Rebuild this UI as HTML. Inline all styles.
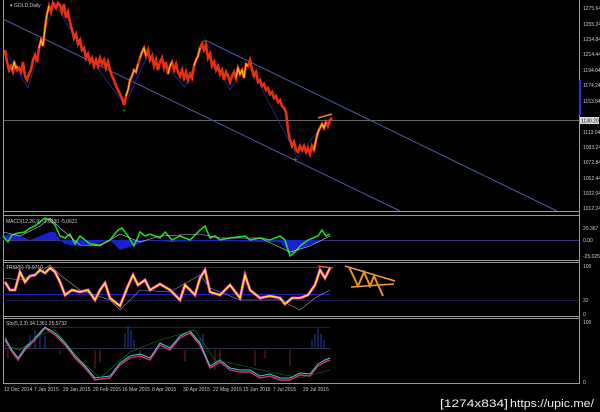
<!DOCTYPE html>
<html><head><style>
html,body{margin:0;padding:0;background:#000;width:600px;height:412px;overflow:hidden}
svg{display:block}
text{font-family:"Liberation Sans",sans-serif}
</style></head><body>
<svg width="600" height="412" viewBox="0 0 600 412">
<rect width="600" height="412" fill="#000"/>
<g stroke="#9a9a9a" stroke-width="1" fill="none">
<line x1="3.5" y1="0" x2="3.5" y2="384"/>
<line x1="579.5" y1="0" x2="579.5" y2="384"/>
<line x1="3" y1="211.5" x2="580" y2="211.5"/>
<line x1="3" y1="215.5" x2="580" y2="215.5"/>
<line x1="3" y1="260.5" x2="580" y2="260.5"/>
<line x1="3" y1="262.5" x2="580" y2="262.5"/>
<line x1="3" y1="316.5" x2="580" y2="316.5"/>
<line x1="3" y1="318.5" x2="580" y2="318.5"/>
<line x1="3" y1="383.5" x2="580" y2="383.5"/>
</g>
<line x1="3" y1="120.5" x2="579" y2="120.5" stroke="#888" stroke-width="0.8"/>
<line x1="3" y1="19" x2="400" y2="211" stroke="#4a5aa8" stroke-width="1"/>
<line x1="205" y1="40" x2="557" y2="211" stroke="#4a5aa8" stroke-width="1"/>
<polyline fill="none" stroke="#2030a0" stroke-width="0.8" points="5,50 28,88 45,30 55,3 75,38 125,105 150,50 185,87 205,40 230,90 250,62 265,95 298,158 322,125"/>
<rect x="579" y="80" width="2" height="35" fill="#3030d0"/>
<polyline fill="none" stroke="#e83010" stroke-width="2.6" points="5,50 7,62 9,70 11,66 13,72 15,64 17,70 19,68 21,72 23,62 25,76 27,80 29,74 31,70 33,60 35,55 37,62 39,48 41,40 43,46 45,28 47,14 49,6 51,12 53,3 56,8 58,3 60,5 62,12 64,4 66,18 68,12 70,22 72,30 74,38 76,34 78,44 80,40 82,50 84,48 86,58 88,54 90,62 92,58 94,66 96,60 98,66 100,58 102,64 104,60 106,68 108,62 110,70 112,76 114,80 116,86 118,90 120,94 122,98 124,105 126,96 128,90 130,80 132,76 134,70 136,72 138,64 140,58 142,52 144,48 146,56 148,50 150,60 152,56 154,66 156,60 158,70 160,62 162,58 164,68 166,62 168,74 170,66 172,62 174,70 176,64 178,72 180,76 182,70 184,78 186,72 188,80 190,74 192,78 194,66 196,60 198,56 200,48 202,44 204,50 206,45 208,58 210,54 212,66 214,62 216,70 218,66 220,74 222,70 224,80 226,72 228,76 230,82 232,76 234,72 236,78 238,68 240,74 242,70 244,78 246,64 248,66 250,60 252,70 254,76 256,72 258,82 260,80 262,86 264,84 266,90 268,88 270,94 272,92 274,98 276,96 278,102 280,100 282,106 284,108 286,112 288,130 290,140 292,146 294,142 296,150 298,152 300,146 302,150 304,146 306,152 308,148 310,154 312,146 314,150 316,140 318,132 320,128 322,124 324,128 326,122 328,126 330,120 332,118"/>
<g stroke="#f0c020" stroke-width="1.2" fill="none">
<polyline points="39,48 41,40 43,46 45,28 47,14 49,6"/>
<polyline points="12,70 14,62 16,68 18,66"/>
<polyline points="126,96 128,90 130,80 132,76 134,70 136,72 138,64"/>
<polyline points="140,58 142,52 144,48 146,56"/>
<polyline points="194,66 196,60 198,56 200,48"/>
<polyline points="236,78 238,68 240,74 242,70 244,78 246,64 248,66"/>
<polyline points="168,74 170,66 172,62"/>
<polyline points="314,150 316,140 318,132 320,128 322,124 324,128 326,122"/>
</g>
<line x1="318" y1="118" x2="332" y2="114" stroke="#f08020" stroke-width="1.5"/>
<text x="122" y="113" font-size="7" fill="#20a020">+</text>
<text x="202" y="44" font-size="7" fill="#20a020">+</text>
<text x="293" y="162" font-size="8" fill="#4090e0">+</text>
<text x="10" y="7" font-size="5" fill="#ccc">▾ GOLD,Daily</text>
<g font-size="5" fill="#ccc">
<text x="583" y="10">1275.64</text><text x="583" y="26">1255.24</text>
<text x="583" y="41">1234.84</text><text x="583" y="56">1214.44</text>
<text x="583" y="72">1194.04</text><text x="583" y="87">1174.24</text>
<text x="583" y="103">1153.84</text><text x="583" y="134">1113.04</text>
<text x="583" y="149">1093.24</text><text x="583" y="164">1072.84</text>
<text x="583" y="180">1052.44</text><text x="583" y="195">1032.04</text>
<text x="583" y="210">1012.24</text>
<text x="583" y="230">20.367</text><text x="583" y="242">0.00</text>
<text x="583" y="258">-25.025</text>
<text x="583" y="268">100</text><text x="583" y="302">32</text><text x="583" y="316">0</text>
<text x="583" y="324">100</text><text x="583" y="384">0</text>
</g>
<rect x="580" y="117" width="19" height="7" fill="#ddd"/>
<text x="581" y="122.5" font-size="5" fill="#000">1130.20</text>
<line x1="3" y1="240.5" x2="579" y2="240.5" stroke="#6040a0" stroke-width="0.8"/>
<polygon fill="#1a20d0" points="30,240 40,236 50,232 55,232 60,240 65,244 75,246 90,245 110,240 120,250 135,245 150,240 170,242 200,241 230,241 260,242 280,242 290,254 300,250 312,244 325,240 330,240 330,240"/>
<polygon fill="#1a20d0" points="3,236 10,234 20,236 30,240 3,240"/>
<polyline fill="none" stroke="#20e020" stroke-width="1.5" points="3,236 8,242 12,235 18,233 25,232 30,228 35,226 40,222 45,218 50,220 55,225 60,236 65,238 70,234 75,244 80,236 90,244 100,245 110,240 118,230 122,228 128,236 134,246 140,232 145,236 150,234 160,238 165,232 172,240 180,236 190,240 200,230 205,226 210,238 215,236 220,240 230,238 245,236 250,240 260,238 270,240 280,236 285,240 290,256 295,252 300,246 308,240 318,236 322,230 326,236 330,234"/>
<polyline fill="none" stroke="#d0d0d0" stroke-width="0.6" points="3,232 20,236 40,226 50,218 60,228 80,245 100,246 120,234 140,242 160,236 200,234 220,238 260,238 290,252 310,246 330,236"/>
<text x="6" y="223" font-size="5" fill="#ccc">MACD(12,26,9) -3.6130 -5.0621</text>
<line x1="3" y1="267.5" x2="330" y2="267.5" stroke="#2020c0" stroke-width="1"/>
<line x1="3" y1="294.5" x2="330" y2="294.5" stroke="#2020c0" stroke-width="1"/>
<line x1="3" y1="300.5" x2="579" y2="300.5" stroke="#202060" stroke-width="0.8"/>
<polyline fill="none" stroke="#e020e0" stroke-width="3" points="5,282 10,290 15,290 20,272 25,282 30,276 35,275 40,270 45,273 50,268 55,272 60,282 65,295 72,290 80,292 88,290 95,300 100,290 105,283 110,298 115,302 120,306 128,286 133,275 138,285 145,280 150,290 160,284 170,290 180,300 185,285 195,295 200,278 205,270 210,292 220,295 230,285 240,298 245,275 250,290 260,298 270,296 280,298 285,304 292,298 300,298 308,295 315,285 320,270 325,278 330,268"/>
<polyline fill="none" stroke="#ffe020" stroke-width="1.6" points="5,282 10,290 15,290 20,272 25,282 30,276 35,275 40,270 45,273 50,268 55,272 60,282 65,295 72,290 80,292 88,290 95,300 100,290 105,283 110,298 115,302 120,306 128,286 133,275 138,285 145,280 150,290 160,284 170,290 180,300 185,285 195,295 200,278 205,270 210,292 220,295 230,285 240,298 245,275 250,290 260,298 270,296 280,298 285,304 292,298 300,298 308,295 315,285 320,270 325,278 330,268"/>
<polyline fill="none" stroke="#a0a0a0" stroke-width="0.6" points="5,278 20,280 40,272 50,265 60,275 80,290 110,300 120,310 140,290 170,292 200,275 210,288 240,300 280,300 300,310 315,298 330,290"/>
<line x1="318" y1="266" x2="333" y2="268" stroke="#f07020" stroke-width="1.3"/>
<text x="6" y="269" font-size="5" fill="#ccc">TRSI(5) 79.9710</text>
<g fill="none" stroke="#f0a040" stroke-width="1.5">
<line x1="345" y1="266" x2="395" y2="281"/>
<line x1="351" y1="287" x2="394" y2="284"/>
</g>
<polyline fill="none" stroke="#f09010" stroke-width="2" points="349,267 358,286 364,272 370,286 374,276 379,287 383,296"/>
<line x1="3" y1="348.5" x2="330" y2="348.5" stroke="#6060a0" stroke-width="0.6"/>
<line x1="50" y1="327.5" x2="330" y2="327.5" stroke="#404080" stroke-width="0.6"/>
<g stroke="#2040a0" stroke-width="1">
<line x1="30" y1="348" x2="30" y2="335"/><line x1="35" y1="348" x2="35" y2="330"/><line x1="40" y1="348" x2="40" y2="332"/><line x1="45" y1="348" x2="45" y2="336"/>
<line x1="125" y1="348" x2="125" y2="333"/><line x1="128" y1="348" x2="128" y2="326"/><line x1="131" y1="348" x2="131" y2="330"/><line x1="134" y1="348" x2="134" y2="340"/>
<line x1="200" y1="348" x2="200" y2="338"/><line x1="203" y1="348" x2="203" y2="334"/>
<line x1="312" y1="348" x2="312" y2="340"/><line x1="315" y1="348" x2="315" y2="334"/><line x1="318" y1="348" x2="318" y2="328"/><line x1="321" y1="348" x2="321" y2="334"/><line x1="324" y1="348" x2="324" y2="340"/>
</g>
<g stroke="#802020" stroke-width="1">
<line x1="8" y1="350" x2="8" y2="358"/><line x1="60" y1="350" x2="60" y2="354"/><line x1="95" y1="350" x2="95" y2="368"/><line x1="100" y1="350" x2="100" y2="362"/>
<line x1="140" y1="350" x2="140" y2="360"/><line x1="185" y1="350" x2="185" y2="362"/><line x1="215" y1="350" x2="215" y2="370"/><line x1="220" y1="350" x2="220" y2="364"/>
<line x1="255" y1="350" x2="255" y2="366"/><line x1="265" y1="350" x2="265" y2="358"/><line x1="290" y1="350" x2="290" y2="366"/>
</g>
<polyline fill="none" stroke="#e03070" stroke-width="1.4" points="5,340 12,352 18,360 25,350 35,340 45,328 55,335 65,345 75,358 85,368 95,380 110,378 120,365 130,358 140,356 150,360 160,345 170,350 180,338 190,333 200,345 210,368 220,362 230,370 240,372 250,372 260,378 270,376 280,380 290,380 300,375 310,376 318,366 325,362 330,360"/>
<polyline fill="none" stroke="#40d0e0" stroke-width="1" points="5,338 12,350 18,358 25,348 35,338 45,327 55,333 65,343 75,356 85,366 95,378 110,376 120,363 130,356 140,354 150,358 160,343 170,348 180,336 190,331 200,343 210,366 220,360 230,368 240,370 250,370 260,376 270,374 280,378 290,378 300,373 310,374 318,364 325,360 330,358"/>
<polyline fill="none" stroke="#108020" stroke-width="0.6" points="5,345 20,350 40,335 55,330 80,360 100,378 130,352 160,340 195,330 215,360 240,365 270,372 300,378 330,370"/>
<text x="6" y="325" font-size="5" fill="#ccc">Sto(5,3,3) 34.1361 25.5732</text>
<g font-size="5" fill="#ccc">
<text x="4" y="391">12 Dec 2014</text><text x="34" y="391">7 Jan 2015</text>
<text x="63" y="391">29 Jan 2015</text><text x="93" y="391">20 Feb 2015</text>
<text x="122" y="391">16 Mar 2015</text><text x="152" y="391">8 Apr 2015</text>
<text x="183" y="391">30 Apr 2015</text><text x="213" y="391">22 May 2015</text>
<text x="243" y="391">15 Jun 2015</text><text x="273" y="391">7 Jul 2015</text>
<text x="303" y="391">29 Jul 2015</text>
</g>
<text x="440" y="407" font-size="11" fill="#eee" textLength="68" lengthAdjust="spacingAndGlyphs">[1274x834]</text>
<text x="510" y="407" font-size="11" fill="#eee" textLength="84" lengthAdjust="spacingAndGlyphs">https://upic.me/</text>
</svg>
</body></html>
